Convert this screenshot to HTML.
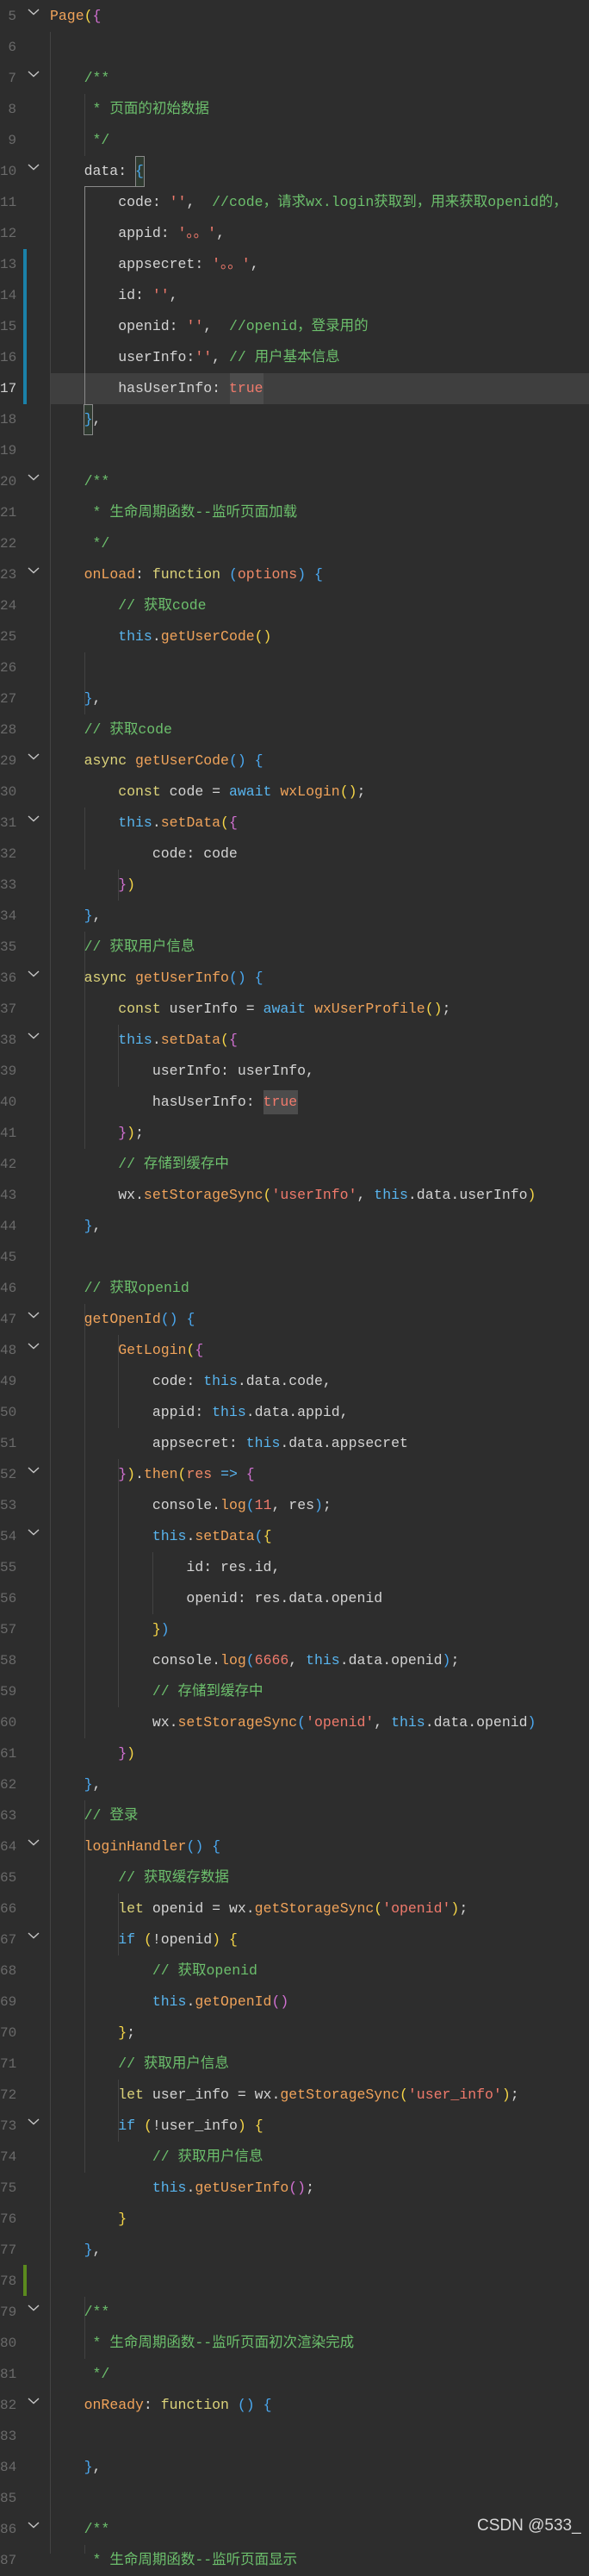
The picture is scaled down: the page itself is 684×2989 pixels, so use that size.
<!DOCTYPE html>
<html><head><meta charset="utf-8">
<style>
html,body{margin:0;padding:0;background:#2d2d2d;}
body{width:684px;height:2963px;position:relative;overflow:hidden;font-family:"Liberation Mono","Noto Sans CJK SC",monospace;}
.l{position:absolute;left:58px;height:36px;line-height:36px;font-size:16.5px;white-space:pre;color:#d4d4d4;}
.n{position:absolute;left:0;width:19px;text-align:right;height:36px;line-height:36px;font-size:16px;color:#6a6a6a;font-family:"Liberation Mono",monospace;}
.g{position:absolute;width:1px;background:#424242;}
.k{color:#dcd37a}.b{color:#58b4ee}.f{color:#f0a35a}.s{color:#f07a6c}.c{color:#6cbf6c}
.y{color:#f5d547}.m{color:#d070d0}.u{color:#4aa8f0}.r{color:#f08a68}
.hl{position:absolute;left:58px;right:0;height:36px;background:#3f3f3f;}
</style></head><body>
<div class="hl" style="top:433px"></div>
<div style="position:absolute;left:267px;top:433px;width:39px;height:36px;background:#4c4c4c"></div>
<div style="position:absolute;left:306px;top:1265px;width:40px;height:28px;background:#4c4c4c"></div>
<div style="position:absolute;left:27px;top:289px;width:4px;height:108px;background:#1b81a8"></div>
<div style="position:absolute;left:27px;top:361px;width:4px;height:108px;background:#1b81a8"></div>
<div style="position:absolute;left:27px;top:2628px;width:4px;height:36px;background:#5b8a1e"></div>
<div class="g" style="left:58px;top:37px;height:2926px"></div>
<div class="g" style="left:98px;top:109px;height:72px"></div>
<div class="g" style="left:98px;top:216px;height:253px;background:#8a8a8a"></div>
<div class="g" style="left:98px;top:757px;height:72px"></div>
<div class="g" style="left:98px;top:937px;height:72px"></div>
<div class="g" style="left:98px;top:1081px;height:252px"></div>
<div class="g" style="left:98px;top:1513px;height:504px"></div>
<div class="g" style="left:98px;top:2089px;height:432px"></div>
<div class="g" style="left:98px;top:2665px;height:72px"></div>
<div class="g" style="left:98px;top:2953px;height:10px"></div>
<div class="g" style="left:137px;top:1009px;height:36px"></div>
<div class="g" style="left:137px;top:1189px;height:72px"></div>
<div class="g" style="left:137px;top:1549px;height:108px"></div>
<div class="g" style="left:137px;top:1693px;height:288px"></div>
<div class="g" style="left:137px;top:2197px;height:72px"></div>
<div class="g" style="left:137px;top:2413px;height:72px"></div>
<div class="g" style="left:177px;top:1801px;height:72px"></div>
<div style="position:absolute;left:157px;top:181px;width:9px;height:34px;border:1px solid #8a8a8a;background:#2f3a30"></div>
<div style="position:absolute;left:97px;top:469px;width:9px;height:34px;border:1px solid #8a8a8a;background:#2f3a30"></div>
<div style="position:absolute;left:98px;top:216px;width:60px;height:1px;background:#8a8a8a"></div>

<div class="l" style="top:1px"><span class="f">Page</span><span class="y">(</span><span class="m">{</span></div>
<div class="l" style="top:73px">    <span class="c">/**</span></div>
<div class="l" style="top:109px">    <span class="c"> * 页面的初始数据</span></div>
<div class="l" style="top:145px">    <span class="c"> */</span></div>
<div class="l" style="top:181px">    data: <span class="u">{</span></div>
<div class="l" style="top:217px">        code: <span class="s">''</span>,  <span class="c">//code，请求wx.login获取到，用来获取openid的，</span></div>
<div class="l" style="top:253px">        appid: <span class="s">'。。'</span>,</div>
<div class="l" style="top:289px">        appsecret: <span class="s">'。。'</span>,</div>
<div class="l" style="top:325px">        id: <span class="s">''</span>,</div>
<div class="l" style="top:361px">        openid: <span class="s">''</span>,  <span class="c">//openid，登录用的</span></div>
<div class="l" style="top:397px">        userInfo:<span class="s">''</span>, <span class="c">// 用户基本信息</span></div>
<div class="l" style="top:433px">        hasUserInfo: <span class="s">true</span></div>
<div class="l" style="top:469px">    <span class="u">}</span>,</div>
<div class="l" style="top:541px">    <span class="c">/**</span></div>
<div class="l" style="top:577px">    <span class="c"> * 生命周期函数--监听页面加载</span></div>
<div class="l" style="top:613px">    <span class="c"> */</span></div>
<div class="l" style="top:649px">    <span class="f">onLoad</span>: <span class="k">function</span> <span class="u">(</span><span class="r">options</span><span class="u">)</span> <span class="u">{</span></div>
<div class="l" style="top:685px">        <span class="c">// 获取code</span></div>
<div class="l" style="top:721px">        <span class="b">this</span>.<span class="f">getUserCode</span><span class="y">()</span></div>
<div class="l" style="top:793px">    <span class="u">}</span>,</div>
<div class="l" style="top:829px">    <span class="c">// 获取code</span></div>
<div class="l" style="top:865px">    <span class="k">async</span> <span class="f">getUserCode</span><span class="u">()</span> <span class="u">{</span></div>
<div class="l" style="top:901px">        <span class="k">const</span> code = <span class="b">await</span> <span class="f">wxLogin</span><span class="y">()</span>;</div>
<div class="l" style="top:937px">        <span class="b">this</span>.<span class="f">setData</span><span class="y">(</span><span class="m">{</span></div>
<div class="l" style="top:973px">            code: code</div>
<div class="l" style="top:1009px">        <span class="m">}</span><span class="y">)</span></div>
<div class="l" style="top:1045px">    <span class="u">}</span>,</div>
<div class="l" style="top:1081px">    <span class="c">// 获取用户信息</span></div>
<div class="l" style="top:1117px">    <span class="k">async</span> <span class="f">getUserInfo</span><span class="u">()</span> <span class="u">{</span></div>
<div class="l" style="top:1153px">        <span class="k">const</span> userInfo = <span class="b">await</span> <span class="f">wxUserProfile</span><span class="y">()</span>;</div>
<div class="l" style="top:1189px">        <span class="b">this</span>.<span class="f">setData</span><span class="y">(</span><span class="m">{</span></div>
<div class="l" style="top:1225px">            userInfo: userInfo,</div>
<div class="l" style="top:1261px">            hasUserInfo: <span class="s">true</span></div>
<div class="l" style="top:1297px">        <span class="m">}</span><span class="y">)</span>;</div>
<div class="l" style="top:1333px">        <span class="c">// 存储到缓存中</span></div>
<div class="l" style="top:1369px">        wx.<span class="f">setStorageSync</span><span class="y">(</span><span class="s">'userInfo'</span>, <span class="b">this</span>.data.userInfo<span class="y">)</span></div>
<div class="l" style="top:1405px">    <span class="u">}</span>,</div>
<div class="l" style="top:1477px">    <span class="c">// 获取openid</span></div>
<div class="l" style="top:1513px">    <span class="f">getOpenId</span><span class="u">()</span> <span class="u">{</span></div>
<div class="l" style="top:1549px">        <span class="f">GetLogin</span><span class="y">(</span><span class="m">{</span></div>
<div class="l" style="top:1585px">            code: <span class="b">this</span>.data.code,</div>
<div class="l" style="top:1621px">            appid: <span class="b">this</span>.data.appid,</div>
<div class="l" style="top:1657px">            appsecret: <span class="b">this</span>.data.appsecret</div>
<div class="l" style="top:1693px">        <span class="m">}</span><span class="y">)</span>.<span class="f">then</span><span class="y">(</span><span class="r">res</span> <span class="b">=&gt;</span> <span class="m">{</span></div>
<div class="l" style="top:1729px">            console.<span class="f">log</span><span class="u">(</span><span class="s">11</span>, res<span class="u">)</span>;</div>
<div class="l" style="top:1765px">            <span class="b">this</span>.<span class="f">setData</span><span class="u">(</span><span class="y">{</span></div>
<div class="l" style="top:1801px">                id: res.id,</div>
<div class="l" style="top:1837px">                openid: res.data.openid</div>
<div class="l" style="top:1873px">            <span class="y">}</span><span class="u">)</span></div>
<div class="l" style="top:1909px">            console.<span class="f">log</span><span class="u">(</span><span class="s">6666</span>, <span class="b">this</span>.data.openid<span class="u">)</span>;</div>
<div class="l" style="top:1945px">            <span class="c">// 存储到缓存中</span></div>
<div class="l" style="top:1981px">            wx.<span class="f">setStorageSync</span><span class="u">(</span><span class="s">'openid'</span>, <span class="b">this</span>.data.openid<span class="u">)</span></div>
<div class="l" style="top:2017px">        <span class="m">}</span><span class="y">)</span></div>
<div class="l" style="top:2053px">    <span class="u">}</span>,</div>
<div class="l" style="top:2089px">    <span class="c">// 登录</span></div>
<div class="l" style="top:2125px">    <span class="f">loginHandler</span><span class="u">()</span> <span class="u">{</span></div>
<div class="l" style="top:2161px">        <span class="c">// 获取缓存数据</span></div>
<div class="l" style="top:2197px">        <span class="k">let</span> openid = wx.<span class="f">getStorageSync</span><span class="y">(</span><span class="s">'openid'</span><span class="y">)</span>;</div>
<div class="l" style="top:2233px">        <span class="b">if</span> <span class="y">(</span>!openid<span class="y">)</span> <span class="y">{</span></div>
<div class="l" style="top:2269px">            <span class="c">// 获取openid</span></div>
<div class="l" style="top:2305px">            <span class="b">this</span>.<span class="f">getOpenId</span><span class="m">()</span></div>
<div class="l" style="top:2341px">        <span class="y">}</span>;</div>
<div class="l" style="top:2377px">        <span class="c">// 获取用户信息</span></div>
<div class="l" style="top:2413px">        <span class="k">let</span> user_info = wx.<span class="f">getStorageSync</span><span class="y">(</span><span class="s">'user_info'</span><span class="y">)</span>;</div>
<div class="l" style="top:2449px">        <span class="b">if</span> <span class="y">(</span>!user_info<span class="y">)</span> <span class="y">{</span></div>
<div class="l" style="top:2485px">            <span class="c">// 获取用户信息</span></div>
<div class="l" style="top:2521px">            <span class="b">this</span>.<span class="f">getUserInfo</span><span class="m">()</span>;</div>
<div class="l" style="top:2557px">        <span class="y">}</span></div>
<div class="l" style="top:2593px">    <span class="u">}</span>,</div>
<div class="l" style="top:2665px">    <span class="c">/**</span></div>
<div class="l" style="top:2701px">    <span class="c"> * 生命周期函数--监听页面初次渲染完成</span></div>
<div class="l" style="top:2737px">    <span class="c"> */</span></div>
<div class="l" style="top:2773px">    <span class="f">onReady</span>: <span class="k">function</span> <span class="u">()</span> <span class="u">{</span></div>
<div class="l" style="top:2845px">    <span class="u">}</span>,</div>
<div class="l" style="top:2917px">    <span class="c">/**</span></div>
<div class="l" style="top:2953px">    <span class="c"> * 生命周期函数--监听页面显示</span></div>

<div class="n" style="top:1px">5</div><div class="n" style="top:37px">6</div><div class="n" style="top:73px">7</div><div class="n" style="top:109px">8</div><div class="n" style="top:145px">9</div><div class="n" style="top:181px">10</div><div class="n" style="top:217px">11</div><div class="n" style="top:253px">12</div><div class="n" style="top:289px">13</div><div class="n" style="top:325px">14</div><div class="n" style="top:361px">15</div><div class="n" style="top:397px">16</div><div class="n" style="top:433px;color:#d0d0d0">17</div><div class="n" style="top:469px">18</div><div class="n" style="top:505px">19</div><div class="n" style="top:541px">20</div><div class="n" style="top:577px">21</div><div class="n" style="top:613px">22</div><div class="n" style="top:649px">23</div><div class="n" style="top:685px">24</div><div class="n" style="top:721px">25</div><div class="n" style="top:757px">26</div><div class="n" style="top:793px">27</div><div class="n" style="top:829px">28</div><div class="n" style="top:865px">29</div><div class="n" style="top:901px">30</div><div class="n" style="top:937px">31</div><div class="n" style="top:973px">32</div><div class="n" style="top:1009px">33</div><div class="n" style="top:1045px">34</div><div class="n" style="top:1081px">35</div><div class="n" style="top:1117px">36</div><div class="n" style="top:1153px">37</div><div class="n" style="top:1189px">38</div><div class="n" style="top:1225px">39</div><div class="n" style="top:1261px">40</div><div class="n" style="top:1297px">41</div><div class="n" style="top:1333px">42</div><div class="n" style="top:1369px">43</div><div class="n" style="top:1405px">44</div><div class="n" style="top:1441px">45</div><div class="n" style="top:1477px">46</div><div class="n" style="top:1513px">47</div><div class="n" style="top:1549px">48</div><div class="n" style="top:1585px">49</div><div class="n" style="top:1621px">50</div><div class="n" style="top:1657px">51</div><div class="n" style="top:1693px">52</div><div class="n" style="top:1729px">53</div><div class="n" style="top:1765px">54</div><div class="n" style="top:1801px">55</div><div class="n" style="top:1837px">56</div><div class="n" style="top:1873px">57</div><div class="n" style="top:1909px">58</div><div class="n" style="top:1945px">59</div><div class="n" style="top:1981px">60</div><div class="n" style="top:2017px">61</div><div class="n" style="top:2053px">62</div><div class="n" style="top:2089px">63</div><div class="n" style="top:2125px">64</div><div class="n" style="top:2161px">65</div><div class="n" style="top:2197px">66</div><div class="n" style="top:2233px">67</div><div class="n" style="top:2269px">68</div><div class="n" style="top:2305px">69</div><div class="n" style="top:2341px">70</div><div class="n" style="top:2377px">71</div><div class="n" style="top:2413px">72</div><div class="n" style="top:2449px">73</div><div class="n" style="top:2485px">74</div><div class="n" style="top:2521px">75</div><div class="n" style="top:2557px">76</div><div class="n" style="top:2593px">77</div><div class="n" style="top:2629px">78</div><div class="n" style="top:2665px">79</div><div class="n" style="top:2701px">80</div><div class="n" style="top:2737px">81</div><div class="n" style="top:2773px">82</div><div class="n" style="top:2809px">83</div><div class="n" style="top:2845px">84</div><div class="n" style="top:2881px">85</div><div class="n" style="top:2917px">86</div><div class="n" style="top:2953px">87</div>

<svg style="position:absolute;left:0;top:0" width="60" height="2963">
<g fill="none" stroke="#c5c5c5" stroke-width="1.4">
<path d="M33 11l6 5.5 6-5.5"/><path d="M33 83l6 5.5 6-5.5"/><path d="M33 191l6 5.5 6-5.5"/>
<path d="M33 551l6 5.5 6-5.5"/><path d="M33 659l6 5.5 6-5.5"/><path d="M33 875l6 5.5 6-5.5"/>
<path d="M33 947l6 5.5 6-5.5"/><path d="M33 1127l6 5.5 6-5.5"/><path d="M33 1199l6 5.5 6-5.5"/>
<path d="M33 1523l6 5.5 6-5.5"/><path d="M33 1559l6 5.5 6-5.5"/><path d="M33 1703l6 5.5 6-5.5"/>
<path d="M33 1775l6 5.5 6-5.5"/><path d="M33 2135l6 5.5 6-5.5"/><path d="M33 2243l6 5.5 6-5.5"/>
<path d="M33 2459l6 5.5 6-5.5"/><path d="M33 2675l6 5.5 6-5.5"/><path d="M33 2783l6 5.5 6-5.5"/>
<path d="M33 2927l6 5.5 6-5.5"/>
</g></svg>

<div style="position:absolute;left:554px;top:2920px;font-family:'Liberation Sans',sans-serif;font-size:19px;color:#d8d8d8;white-space:nowrap">CSDN @533_</div>
</body></html>
